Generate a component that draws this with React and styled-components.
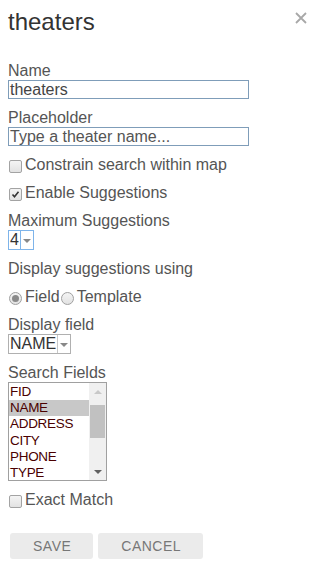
import React from "react"
import styled, { createGlobalStyle } from "styled-components"

const GlobalStyle = createGlobalStyle`
  * {
    margin: 0;
    padding: 0;
    box-sizing: border-box;
  }
  body {
    background: #fff;
    font-family: "Liberation Sans", Arial, sans-serif;
    color: #555;
  }
`

const Panel = styled.div`
  width: 316px;
  height: 568px;
  padding: 8px 8px 0 8px;
  display: flex;
  flex-direction: column;
`

const Header = styled.div`
  display: flex;
  justify-content: space-between;
  align-items: flex-start;
  height: 54px;
`

const Title = styled.h1`
  font-size: 24px;
  font-weight: normal;
  color: #333;
  line-height: 28px;
`

const Close = styled.span`
  display: block;
  width: 12px;
  height: 12px;
  margin: 2px 1px 0 0;
`

const Field = styled.div`
  display: flex;
  flex-direction: column;
  align-items: flex-start;
  margin-bottom: 10px;
`

const Label = styled.label`
  font-size: 16px;
  line-height: 18px;
  color: #555;
`

const TextInput = styled.div`
  width: 241px;
  height: 19px;
  border: 1px solid #7f9db9;
  font-size: 16px;
  line-height: 17px;
  padding-left: 1px;
  color: ${(p) => (p.$dim ? "#555" : "#444")};
  white-space: nowrap;
  overflow: hidden;
`

const CheckRow = styled.div`
  display: flex;
  align-items: center;
  height: 18px;
  font-size: 16px;
  color: #555;
  margin-bottom: 10px;
`

const Box = styled.span`
  width: 13px;
  height: 13px;
  margin: 2px 3px 0 1px;
  border: 1px solid #a3a3a3;
  border-radius: 2px;
  background: linear-gradient(#f4f4f4, #e2e2e2);
  display: flex;
  align-items: center;
  justify-content: center;
`

const Radio = styled.span`
  width: 13px;
  height: 13px;
  margin: 2px 3px 0 1px;
  border: 1px solid #a0a0a0;
  border-radius: 50%;
  background: linear-gradient(#f4f4f4, #e2e2e2);
  display: flex;
  align-items: center;
  justify-content: center;
  &::after {
    content: "";
    width: 7px;
    height: 7px;
    border-radius: 50%;
    background: ${(p) => (p.$on ? "#8a8a8a" : "transparent")};
  }
`

const Select = styled.div`
  display: flex;
  height: 20px;
  border: 1px solid ${(p) => (p.$focus ? "#7eb4ea" : "#b0b0b0")};
  font-size: 16px;
  line-height: 18px;
  color: #333;
`

const SelectValue = styled.span`
  padding: 0 1px;
`

const SelectArrow = styled.span`
  width: 13px;
  border-left: 1px solid ${(p) => (p.$focus ? "#7eb4ea" : "#c8c8c8")};
  display: flex;
  align-items: center;
  justify-content: center;
  &::after {
    content: "";
    border-left: 4px solid transparent;
    border-right: 4px solid transparent;
    border-top: 4px solid #888;
    margin-top: 1px;
  }
`

const ListBox = styled.div`
  width: 99px;
  height: 99px;
  border: 1px solid #a0a0a0;
  display: flex;
`

const Options = styled.ul`
  list-style: none;
  flex: 1;
  padding-top: 1px;
`

const Option = styled.li`
  height: 16.2px;
  line-height: 16px;
  font-size: 13.5px;
  letter-spacing: -0.3px;
  color: #4a0000;
  padding-left: 1px;
  background: ${(p) => (p.$selected ? "#c8c8c8" : "transparent")};
`

const Scrollbar = styled.div`
  width: 17px;
  background: #f0f0f0;
  display: flex;
  flex-direction: column;
  align-items: center;
`

const ScrollArrow = styled.span`
  height: 17px;
  display: flex;
  align-items: center;
  &::after {
    content: "";
    border-left: 4px solid transparent;
    border-right: 4px solid transparent;
    ${(p) =>
      p.$up
        ? "border-bottom: 4px solid #c8c8c8;"
        : "border-top: 4px solid #606060;"}
  }
`

const Thumb = styled.span`
  width: 15px;
  height: 33px;
  background: #c1c1c1;
  margin-top: 5px;
`

const Spacer = styled.span`
  flex: 1;
`

const Buttons = styled.div`
  display: flex;
  gap: 5px;
  margin: 14px 0 0 2px;
`

const Button = styled.button`
  height: 26px;
  padding: 0 22px 0 23px;
  border: none;
  border-radius: 3px;
  background: #ebebeb;
  color: #777;
  font-family: "Liberation Sans", Arial, sans-serif;
  font-size: 14px;
  letter-spacing: 0.5px;
  text-transform: uppercase;
`

const fields = ["FID", "NAME", "ADDRESS", "CITY", "PHONE", "TYPE"]

export default function App() {
  return (
    <>
      <GlobalStyle />
      <Panel>
        <Header>
          <Title>theaters</Title>
          <Close>
            <svg width="12" height="12" viewBox="0 0 12 12">
              <path d="M1 1L11 11M11 1L1 11" stroke="#a8a8a8" strokeWidth="1.8" />
            </svg>
          </Close>
        </Header>

        <Field>
          <Label>Name</Label>
          <TextInput>theaters</TextInput>
        </Field>

        <Field>
          <Label>Placeholder</Label>
          <TextInput $dim>Type a theater name...</TextInput>
        </Field>

        <CheckRow>
          <Box />
          Constrain search within map
        </CheckRow>

        <CheckRow>
          <Box>
            <svg width="9" height="9" viewBox="0 0 9 9">
              <path d="M1.5 4.5L3.5 6.8L7.5 1.8" stroke="#333" strokeWidth="1.6" fill="none" />
            </svg>
          </Box>
          Enable Suggestions
        </CheckRow>

        <Field>
          <Label>Maximum Suggestions</Label>
          <Select $focus>
            <SelectValue>4</SelectValue>
            <SelectArrow $focus />
          </Select>
        </Field>

        <Field>
          <Label>Display suggestions using</Label>
        </Field>

        <CheckRow>
          <Radio $on />
          Field
          <Radio />
          Template
        </CheckRow>

        <Field>
          <Label>Display field</Label>
          <Select>
            <SelectValue>NAME</SelectValue>
            <SelectArrow />
          </Select>
        </Field>

        <Field>
          <Label>Search Fields</Label>
          <ListBox>
            <Options>
              {fields.map((f) => (
                <Option key={f} $selected={f === "NAME"}>
                  {f}
                </Option>
              ))}
            </Options>
            <Scrollbar>
              <ScrollArrow $up />
              <Thumb />
              <Spacer />
              <ScrollArrow />
            </Scrollbar>
          </ListBox>
        </Field>

        <CheckRow>
          <Box />
          Exact Match
        </CheckRow>

        <Buttons>
          <Button>Save</Button>
          <Button>Cancel</Button>
        </Buttons>
      </Panel>
    </>
  )
}
